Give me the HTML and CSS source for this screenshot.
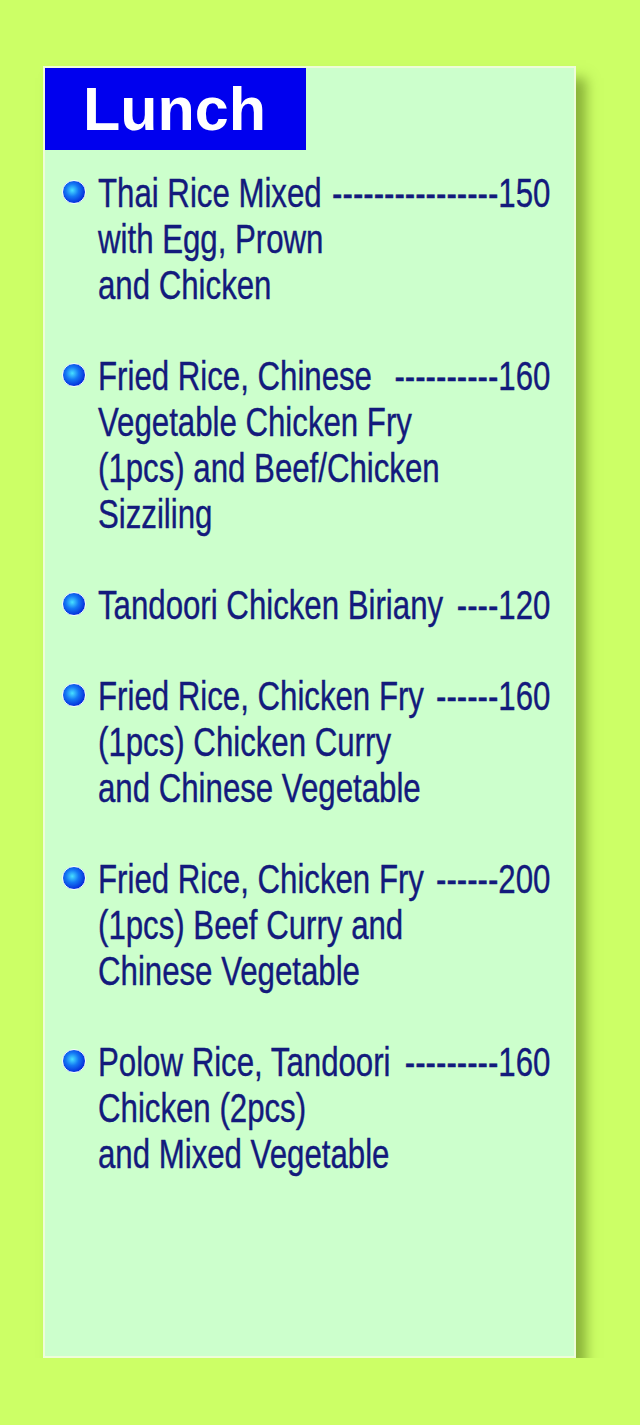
FILE: index.html
```html
<!DOCTYPE html>
<html lang="en">
<head>
    <meta charset="UTF-8">
    <meta name="viewport" content="width=device-width, initial-scale=1.0">
    <title>Lunch Menu</title>
    <link rel="stylesheet" href="styles.css">
</head>
<body>

    <div class="menu">
        <h1 class="titulo">Lunch</h1>

        <ul class="items">
            <li class="item">
                <div class="texto">
                    <div class="linea">
                        <span class="nombre">Thai Rice Mixed</span>
                        <span class="guiones">----------------</span>
                        <span class="precio">150</span>
                    </div>
                    <div class="resto">with Egg, Prown<br>and Chicken</div>
                </div>
            </li>
            <li class="item">
                <div class="texto">
                    <div class="linea">
                        <span class="nombre">Fried Rice, Chinese</span>
                        <span class="guiones">----------</span>
                        <span class="precio">160</span>
                    </div>
                    <div class="resto">Vegetable Chicken Fry<br>(1pcs) and Beef/Chicken<br>Sizziling</div>
                </div>
            </li>
            <li class="item">
                <div class="texto">
                    <div class="linea">
                        <span class="nombre">Tandoori Chicken Biriany</span>
                        <span class="guiones">----</span>
                        <span class="precio">120</span>
                    </div>
                </div>
            </li>
            <li class="item">
                <div class="texto">
                    <div class="linea">
                        <span class="nombre">Fried Rice, Chicken Fry</span>
                        <span class="guiones">------</span>
                        <span class="precio">160</span>
                    </div>
                    <div class="resto">(1pcs) Chicken Curry<br>and Chinese Vegetable</div>
                </div>
            </li>
            <li class="item">
                <div class="texto">
                    <div class="linea">
                        <span class="nombre">Fried Rice, Chicken Fry</span>
                        <span class="guiones">------</span>
                        <span class="precio">200</span>
                    </div>
                    <div class="resto">(1pcs) Beef Curry and<br>Chinese Vegetable</div>
                </div>
            </li>
            <li class="item">
                <div class="texto">
                    <div class="linea">
                        <span class="nombre">Polow Rice, Tandoori</span>
                        <span class="guiones">---------</span>
                        <span class="precio">160</span>
                    </div>
                    <div class="resto">Chicken (2pcs)<br>and Mixed Vegetable</div>
                </div>
            </li>
        </ul>
    </div>

</body>
</html>
```

FILE: styles.css
```css
body {
    margin: 0;
    padding: 66px 0 0 43px;
    background-color: #ccff66;
    font-family: "Liberation Sans", Arial, sans-serif;
    overflow: hidden;
}
.menu {
    width: 529px;
    height: 1288px;
    background: #ccffcc;
    border: 2px solid #eefcd8;
    box-shadow: 10px 12px 12px rgba(70, 100, 10, 0.5);
}
.titulo {
    margin: 0;
    width: 223px;
    height: 82px;
    padding-left: 38px;
    background: #0000ee;
    color: white;
    font-weight: bold;
    font-size: 61px;
    line-height: 82px;
}
.items {
    list-style: none;
    margin: 0;
    padding: 20px 0 0 17px;
}
.item {
    position: relative;
    padding-left: 36px;
    margin-bottom: 45px;
    color: #131a7c;
    font-size: 40px;
    line-height: 46px;
    -webkit-text-stroke: 0.4px #131a7c;
}
.item::before {
    content: "";
    position: absolute;
    left: 0;
    top: 10px;
    width: 22px;
    height: 22px;
    border: 1.5px solid #f4faff;
    border-radius: 50%;
    background: radial-gradient(circle at 42% 42%, #48e0ff 0%, #1478f4 35%, #0428d8 75%, #001aa0 100%);
}
/* texto angosto: Liberation Sans comprimido como Arial Narrow */
.texto {
    width: 580px;
    transform: scaleX(0.78);
    transform-origin: left top;
}
.linea {
    display: flex;
    white-space: nowrap;
}
.guiones {
    flex: 1;
    text-align: right;
    overflow: hidden;
    direction: rtl;
    padding-left: 10px;
}
```
